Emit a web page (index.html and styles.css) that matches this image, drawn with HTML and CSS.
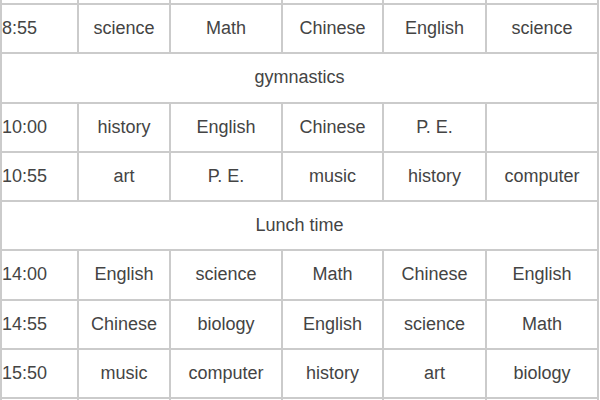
FILE: index.html
```html
<!DOCTYPE html>
<html>
<head>
<meta charset="utf-8">
<link rel="stylesheet" href="styles.css">
</head>
<body>
<table class="timetable">
  <colgroup>
    <col class="c-time"><col class="c1"><col class="c2"><col class="c3"><col class="c4"><col class="c5">
  </colgroup>
  <tr class="edge-row"><td></td><td></td><td></td><td></td><td></td><td></td></tr>
  <tr><td class="time">8:55</td><td>science</td><td>Math</td><td>Chinese</td><td>English</td><td>science</td></tr>
  <tr><td colspan="6">gymnastics</td></tr>
  <tr><td class="time">10:00</td><td>history</td><td>English</td><td>Chinese</td><td>P. E.</td><td></td></tr>
  <tr><td class="time">10:55</td><td>art</td><td>P. E.</td><td>music</td><td>history</td><td>computer</td></tr>
  <tr><td colspan="6">Lunch time</td></tr>
  <tr><td class="time">14:00</td><td>English</td><td>science</td><td>Math</td><td>Chinese</td><td>English</td></tr>
  <tr><td class="time">14:55</td><td>Chinese</td><td>biology</td><td>English</td><td>science</td><td>Math</td></tr>
  <tr><td class="time">15:50</td><td>music</td><td>computer</td><td>history</td><td>art</td><td>biology</td></tr>
  <tr class="edge-row"><td></td><td></td><td></td><td></td><td></td><td></td></tr>
</table>
</body>
</html>
```
FILE: styles.css
```css
html, body {
  margin: 0;
  padding: 0;
  background: #fff;
  overflow: hidden;
}
.timetable {
  border-collapse: collapse;
  table-layout: fixed;
  width: 597px;
  margin-top: -46.25px;
  margin-left: 0;
  font-family: "Liberation Sans", Arial, sans-serif;
  font-size: 18px;
  color: #444;
}
.c-time { width: 77px; }
.c1 { width: 92px; }
.c2 { width: 112px; }
.c3 { width: 101px; }
.c4 { width: 103px; }
.c5 { width: 112px; }
.timetable tr {
  height: 49.25px;
}
.timetable td {
  border: 2px solid #cbcbcb;
  text-align: center;
  vertical-align: middle;
  padding: 0 2px;
  white-space: nowrap;
}
.timetable td.time {
  text-align: left;
  padding-left: 0;
}
```
